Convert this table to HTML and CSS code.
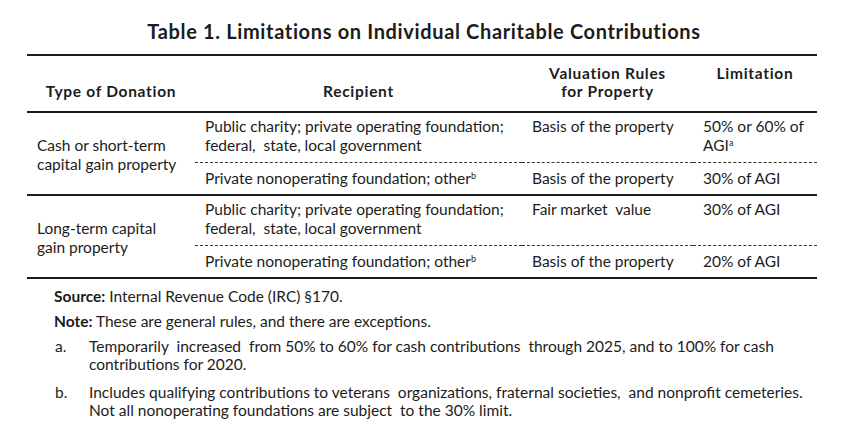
FILE: index.html
```html
<!DOCTYPE html>
<html>
<head>
<meta charset="utf-8">
<link rel="stylesheet" href="styles.css">
</head>
<body>
<div class="page">
  <h1 class="title">Table 1. Limitations on Individual Charitable Contributions</h1>
  <table class="tbl">
    <colgroup>
      <col class="c1"><col class="c2"><col class="c3"><col class="c4">
    </colgroup>
    <thead>
      <tr>
        <th class="h-bottom">Type of Donation</th>
        <th class="h-bottom">Recipient</th>
        <th class="h-top">Valuation Rules<br>for Property</th>
        <th class="h-top">Limitation</th>
      </tr>
    </thead>
    <tbody class="group">
      <tr class="sub1">
        <td rowspan="2" class="type">Cash or short-term<br>capital gain property</td>
        <td>Public charity; private operating foundation;<br>federal,&nbsp; state, local government</td>
        <td>Basis of the property</td>
        <td>50% or 60% of<br>AGI<sup class="sup-a">a</sup></td>
      </tr>
      <tr class="sub2">
        <td>Private nonoperating foundation; other<sup>b</sup></td>
        <td>Basis of the property</td>
        <td>30% of AGI</td>
      </tr>
    </tbody>
    <tbody class="group">
      <tr class="sub1">
        <td rowspan="2" class="type">Long-term capital<br>gain property</td>
        <td>Public charity; private operating foundation;<br>federal,&nbsp; state, local government</td>
        <td>Fair market&nbsp; value</td>
        <td>30% of AGI</td>
      </tr>
      <tr class="sub2">
        <td>Private nonoperating foundation; other<sup>b</sup></td>
        <td>Basis of the property</td>
        <td>20% of AGI</td>
      </tr>
    </tbody>
  </table>
  <div class="notes">
    <p class="note"><b>Source:</b> Internal Revenue Code (IRC) §170.</p>
    <p class="note"><b>Note:</b> These are general rules, and there are exceptions.</p>
    <div class="fn">
      <span class="fn-mark">a.</span>
      <span class="fn-text">Temporarily&nbsp; increased&nbsp; from 50% to 60% for cash contributions&nbsp; through 2025, and to 100% for cash contributions for 2020.</span>
    </div>
    <div class="fn">
      <span class="fn-mark">b.</span>
      <span class="fn-text">Includes qualifying contributions to veterans&nbsp; organizations, fraternal societies,&nbsp; and nonprofit cemeteries. Not all nonoperating foundations are subject&nbsp; to the 30% limit.</span>
    </div>
  </div>
</div>
</body>
</html>
```

FILE: styles.css
```css
html, body {
  margin: 0;
  padding: 0;
  background: #ffffff;
}
body {
  font-family: "Lato", "Open Sans", sans-serif;
  color: #1c1c1c;
}
.page {
  width: 842px;
  padding-top: 18px;
}
.title {
  margin: 0;
  font-size: 20px;
  font-weight: 700;
  text-align: center;
  letter-spacing: 0.65px;
  line-height: 26px;
  padding-left: 6px;
}
.tbl {
  margin: 10px 0 0 27px;
  width: 790px;
  border-collapse: collapse;
  table-layout: fixed;
  font-size: 15.5px;
  line-height: 19px;
}
.c1 { width: 168px; }
.c2 { width: 327px; }
.c3 { width: 171px; }
.c4 { width: 124px; }
.tbl thead tr {
  border-top: 2px solid #1c1c1c;
  border-bottom: 2px solid #1c1c1c;
}
.tbl th {
  font-weight: 700;
  text-align: center;
  padding: 8px 8px 11px;
  letter-spacing: 0.7px;
  line-height: 18px;
}
.h-bottom { vertical-align: bottom; }
.h-top { vertical-align: top; }
.group {
  border-bottom: 2px solid #1c1c1c;
}
.tbl td {
  vertical-align: top;
  padding: 0 10px;
  text-align: left;
}
.tbl td.type {
  vertical-align: middle;
  padding-left: 10px;
  padding-bottom: 2px;
}
.sub1 td {
  padding-top: 4px;
  padding-bottom: 7px;
}
.sub1 td:not(.type) {
  border-bottom: 1px dashed #333;
}
.sub2 td {
  padding-top: 6px;
  padding-bottom: 6px;
}
sup {
  font-size: 9px;
  line-height: 0;
  vertical-align: 5px;
}
.notes {
  margin: 8px 0 0 54px;
  font-size: 15.5px;
  line-height: 18px;
}
.note {
  margin: 0 0 7px;
}
.fn {
  display: flex;
  margin-bottom: 10px;
  width: 766px;
}
.fn-mark {
  width: 34px;
  flex: none;
  padding-left: 1px;
}
.fn-text {
  flex: 1;
}
```
